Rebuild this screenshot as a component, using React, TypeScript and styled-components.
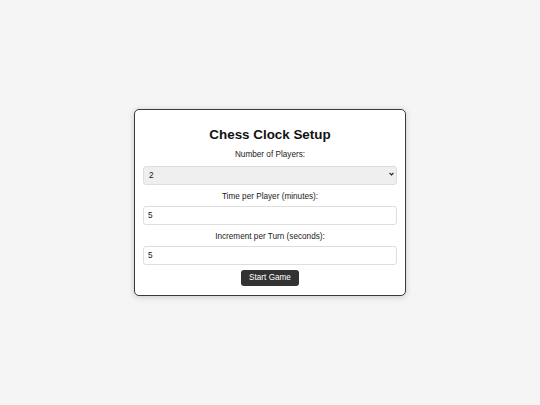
import React, { ReactElement } from 'react';
import styled, { createGlobalStyle } from 'styled-components';

const GlobalStyle = createGlobalStyle`
  html, body {
    margin: 0;
    padding: 0;
  }
  body {
    background-color: #f5f5f5;
    font-family: 'Liberation Sans', Arial, sans-serif;
  }
`;

const Page = styled.main`
  display: flex;
  align-items: center;
  justify-content: center;
  height: 100vh;
`;

const Card = styled.form`
  box-sizing: border-box;
  width: 272px;
  height: 187px;
  padding: 16.5px 8px 9px;
  background-color: #fff;
  border: 1px solid #3a3a3a;
  border-radius: 5px;
  box-shadow: 0 1px 6px rgba(0, 0, 0, 0.18);
  display: flex;
  flex-direction: column;
  align-items: stretch;
`;

const Title = styled.h2`
  margin: 0 0 8px;
  font-size: 13.4px;
  line-height: 15px;
  font-weight: 700;
  text-align: center;
  color: #111;
`;

const Field = styled.div<{ $last?: boolean }>`
  display: flex;
  flex-direction: column;
  margin-bottom: ${({ $last }) => ($last ? '4.5px' : '7px')};
`;

const Label = styled.label`
  display: block;
  font-size: 8.2px;
  line-height: 9px;
  color: #1a1a1a;
  text-align: center;
  margin-bottom: 5.3px;
`;

const SelectWrap = styled.div`
  position: relative;
`;

const Select = styled.select`
  box-sizing: border-box;
  width: 100%;
  height: 19px;
  padding: 0 14px 0 5px;
  font-family: 'Liberation Sans', Arial, sans-serif;
  font-size: 8.2px;
  color: #111;
  background-color: #efefef;
  border: 1px solid #dedede;
  border-radius: 3px;
  outline: none;
  appearance: none;
  -webkit-appearance: none;
`;

const Chevron = styled.svg`
  position: absolute;
  right: 3px;
  top: 50%;
  width: 5px;
  height: 4px;
  margin-top: -2px;
  pointer-events: none;
`;

const Input = styled.input`
  box-sizing: border-box;
  width: 100%;
  height: 19px;
  padding: 0 4px;
  font-family: 'Liberation Sans', Arial, sans-serif;
  font-size: 8.2px;
  color: #111;
  background-color: #fff;
  border: 1px solid #dedede;
  border-radius: 3px;
  outline: none;
`;

const StartButton = styled.button`
  align-self: center;
  box-sizing: border-box;
  width: 58px;
  height: 17px;
  padding: 0;
  font-family: 'Liberation Sans', Arial, sans-serif;
  font-size: 8.2px;
  color: #fff;
  background-color: #333;
  border: none;
  border-radius: 3px;
  cursor: pointer;
`;

const App = (): ReactElement => (
  <>
    <GlobalStyle />
    <Page>
      <Card onSubmit={(e) => e.preventDefault()}>
        <Title>Chess Clock Setup</Title>
        <Field>
          <Label htmlFor="players">Number of Players:</Label>
          <SelectWrap>
            <Select id="players" defaultValue="2">
              <option value="2">2</option>
              <option value="3">3</option>
              <option value="4">4</option>
            </Select>
            <Chevron viewBox="0 0 5 4">
              <path d="M0.6 1 L2.5 2.9 L4.4 1" fill="none" stroke="#222" strokeWidth="1.1" />
            </Chevron>
          </SelectWrap>
        </Field>
        <Field>
          <Label htmlFor="time">Time per Player (minutes):</Label>
          <Input id="time" type="number" defaultValue={5} />
        </Field>
        <Field $last>
          <Label htmlFor="increment">Increment per Turn (seconds):</Label>
          <Input id="increment" type="number" defaultValue={5} />
        </Field>
        <StartButton type="submit">Start Game</StartButton>
      </Card>
    </Page>
  </>
);

export default App;
